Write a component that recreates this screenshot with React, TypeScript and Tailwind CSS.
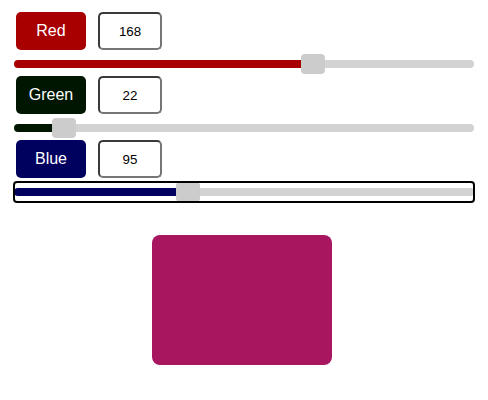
import React, { useState } from "react";

const channels = [
  { key: "r", label: "Red", fill: (v: number) => `rgb(${v},0,0)` },
  { key: "g", label: "Green", fill: (v: number) => `rgb(0,${v},0)` },
  { key: "b", label: "Blue", fill: (v: number) => `rgb(0,0,${v})` },
] as const;

type Key = "r" | "g" | "b";

export default function App() {
  const [rgb, setRgb] = useState<Record<Key, number>>({ r: 168, g: 22, b: 95 });

  const set = (k: Key, v: number) =>
    setRgb((prev) => ({ ...prev, [k]: Math.max(0, Math.min(255, isNaN(v) ? 0 : v)) }));

  return (
    <div className="px-[14px] pt-3 font-['Liberation_Sans',Arial,sans-serif] bg-white min-h-[400px]">
      {channels.map((ch, i) => {
        const v = rgb[ch.key];
        // fill stops under the thumb (thumb is 24px wide)
        const stop = 12 + (v / 255) * 436;
        return (
          <div key={ch.key} className="flex flex-col">
            <div className="flex gap-3 ml-0.5">
              <button
                className="w-[70px] h-[38px] rounded-[5px] text-white text-base"
                style={{ backgroundColor: ch.fill(v) }}
              >
                {ch.label}
              </button>
              <input
                type="text"
                value={v}
                onChange={(e) => set(ch.key, parseInt(e.target.value, 10))}
                className="w-16 h-[38px] rounded-[5px] border-2 border-[#767676] border-t-[#3a3a3a] border-l-[#3a3a3a] text-center text-[13.33px] text-black outline-none"
              />
            </div>
            <div
              className={
                i === 2
                  ? "mt-1 mb-0.5 h-5 flex items-center outline-2 outline-black outline-offset-[-1px] rounded-[3px]"
                  : "mt-1 mb-0.5 h-5 flex items-center"
              }
            >
              <input
                type="range"
                min={0}
                max={255}
                value={v}
                onChange={(e) => set(ch.key, parseInt(e.target.value, 10))}
                className="w-full h-2 appearance-none rounded-full outline-none cursor-pointer [&::-webkit-slider-thumb]:appearance-none [&::-webkit-slider-thumb]:w-6 [&::-webkit-slider-thumb]:h-5 [&::-webkit-slider-thumb]:rounded-[4px] [&::-webkit-slider-thumb]:bg-[#cccccc]"
                style={{
                  background: `linear-gradient(to right, ${ch.fill(v)} 0 ${stop}px, #d3d3d3 ${stop}px 100%)`,
                }}
              />
            </div>
          </div>
        );
      })}

      <div
        className="mt-[31px] ml-[138px] w-[180px] h-[130px] rounded-lg"
        style={{ backgroundColor: `rgb(${rgb.r},${rgb.g},${rgb.b})` }}
      />
    </div>
  );
}
